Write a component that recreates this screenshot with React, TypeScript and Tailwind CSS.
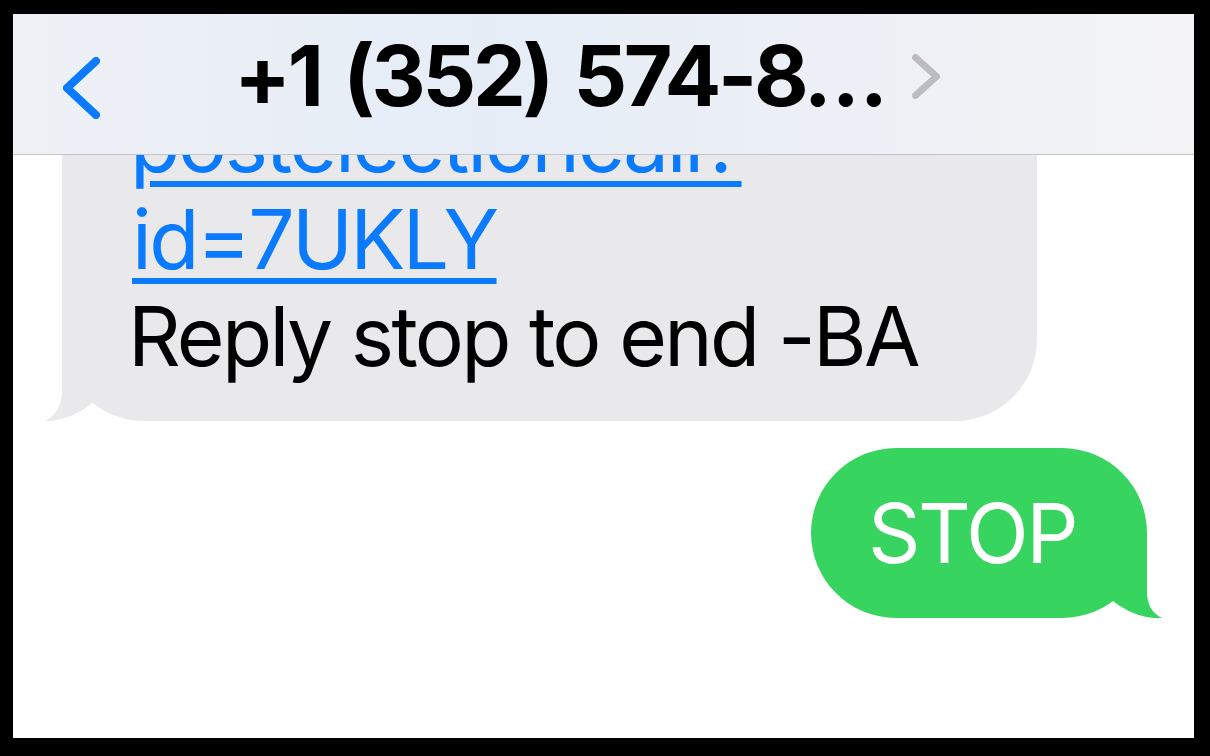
import React from "react";

export default function App() {
  return (
    <div className="w-[1210px] h-[756px] bg-black pt-[14px] pl-[13px] overflow-hidden">
      <div
        className="w-[1181px] h-[724px] bg-white overflow-hidden flex flex-col"
        style={{ fontFamily: "Inter, 'Noto Sans', sans-serif" }}
      >
        {/* Header */}
        <div className="relative z-10 h-[141px] shrink-0 flex items-start border-b border-[#c4c4c7] bg-gradient-to-r from-[#eef1f6] via-[#e6edf7] via-40% to-[#f3f3f5]">
          <svg
            className="ml-[50px] mt-[43px] shrink-0"
            width="37"
            height="62"
            viewBox="0 0 37 62"
            fill="none"
          >
            <polyline
              points="33,4 4,31 33,58"
              stroke="#0a7aff"
              strokeWidth="8"
              strokeLinecap="round"
              strokeLinejoin="round"
            />
          </svg>
          <div className="ml-[134px] mt-[20px] text-[84px] leading-[84px] font-bold text-black tracking-[-3.3px] [word-spacing:6px] whitespace-nowrap">
            +1 (352) 574-8…
          </div>
          <svg
            className="ml-[27px] mt-[40px] shrink-0"
            width="28"
            height="45"
            viewBox="0 0 28 45"
            fill="none"
          >
            <polyline
              points="3.5,3.5 24.5,22.5 3.5,41.5"
              stroke="#bdbdc1"
              strokeWidth="7"
              strokeLinecap="round"
              strokeLinejoin="round"
            />
          </svg>
        </div>

        {/* Messages */}
        <div className="flex-1 overflow-hidden flex flex-col">
          {/* Incoming gray bubble */}
          <div className="relative ml-[49px] mt-[-97px] w-[975px] bg-[#e9e9eb] rounded-[82px] pt-[36px] pb-[36px] pl-[66px] text-[82px] leading-[97px] text-black tracking-[-2.7px]">
            <span className="text-[#0a7aff] underline decoration-[length:6px] underline-offset-[9px]">
              <span className="ml-[2px] tracking-[-2.3px]">postelectioncall?</span>
              <br />
              <span className="ml-[4px]">id=7UKLY</span>
            </span>
            <br />
            Reply stop to end -BA
            <svg
              className="absolute left-[-17px] bottom-0"
              width="56"
              height="80"
              viewBox="0 0 56 80"
            >
              <path
                d="M17 0 L17 50 C17 65 10 75 0 80 C17 80 35 73 48 61 L56 61 L56 0 Z"
                fill="#e9e9eb"
              />
            </svg>
          </div>

          {/* Outgoing green bubble */}
          <div className="self-end mr-[47px] mt-[27px] relative">
            <div className="w-[336px] h-[170px] bg-[#37d45f] rounded-[85px] flex items-center justify-center pr-[14px] text-white text-[82px] tracking-[-2.5px]">
              STOP
            </div>
            <svg
              className="absolute right-[-15px] bottom-0"
              width="62"
              height="85"
              viewBox="0 0 62 85"
            >
              <path
                d="M0 0 L47 0 L47 59 C47 72 53 81 62 85 C46 86 28 80 13 68 L0 68 Z"
                fill="#37d45f"
              />
            </svg>
          </div>
        </div>
      </div>
    </div>
  );
}
